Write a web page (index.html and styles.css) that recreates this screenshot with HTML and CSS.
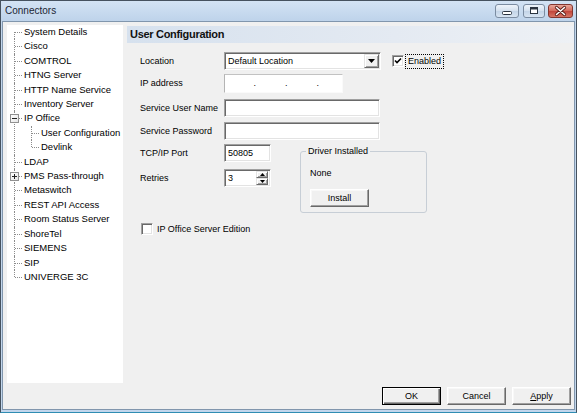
FILE: index.html
```html
<!DOCTYPE html>
<html>
<head>
<meta charset="utf-8">
<title>Connectors</title>
<link rel="stylesheet" href="styles.css">
</head>
<body>
<div class="window">
  <div class="titlebar">
    <span class="title">Connectors</span>
    <div class="caption-btns">
      <span class="cap cap-min"><svg width="22" height="12" viewBox="0 0 22 12"><rect x="6.5" y="6.5" width="9" height="3" rx="1" fill="#fff" stroke="#2b3440"/></svg></span>
      <span class="cap cap-max"><svg width="20" height="12" viewBox="0 0 20 12"><rect x="6.5" y="2.5" width="7" height="6" fill="#fff" stroke="#2b3440"/><rect x="7" y="3" width="6" height="1.5" fill="#2b3440"/></svg></span>
      <span class="cap cap-close"><svg width="23" height="12" viewBox="0 0 23 12"><path d="M7.5 2.5 L15.5 9.5 M15.5 2.5 L7.5 9.5" stroke="#5a1d18" stroke-width="3.2" stroke-linecap="round"/><path d="M7.5 2.5 L15.5 9.5 M15.5 2.5 L7.5 9.5" stroke="#fff" stroke-width="1.6" stroke-linecap="round"/></svg></span>
    </div>
  </div>
  <div class="client">
    <div class="main">
      <div class="tree-panel">
        <ul class="tree">
          <li>System Details</li>
          <li>Cisco</li>
          <li>COMTROL</li>
          <li>HTNG Server</li>
          <li>HTTP Name Service</li>
          <li>Inventory Server</li>
          <li class="has-kids"><span class="toggle toggle-minus"></span>IP Office
            <ul class="sub">
              <li>User Configuration</li>
              <li>Devlink</li>
            </ul>
          </li>
          <li>LDAP</li>
          <li class="has-kids"><span class="toggle toggle-plus"></span>PMS Pass-through</li>
          <li>Metaswitch</li>
          <li>REST API Access</li>
          <li>Room Status Server</li>
          <li>ShoreTel</li>
          <li>SIEMENS</li>
          <li>SIP</li>
          <li>UNIVERGE 3C</li>
        </ul>
      </div>
      <div class="content">
        <div class="header">User Configuration</div>
        <div class="form">
          <div class="row">
            <span class="lbl">Location</span>
            <div class="select sunken">
              <span class="select-value">Default Location</span>
              <span class="select-btn raised"><svg width="7" height="4" viewBox="0 0 7 4"><path d="M0 0 H7 L3.5 4 Z" fill="#000"/></svg></span>
            </div>
            <span class="check check-enabled">
              <span class="box sunken"><svg width="8" height="8" viewBox="0 0 8 8"><path d="M1 3.5 L3 5.5 L7 1.5" fill="none" stroke="#000" stroke-width="1.6"/></svg></span>
              <span class="focus">Enabled</span>
            </span>
          </div>
          <div class="row row-ip">
            <span class="lbl">IP address</span>
            <div class="ipbox">
              <span class="oct"></span><span class="dot">.</span><span class="oct"></span><span class="dot">.</span><span class="oct"></span><span class="dot">.</span><span class="oct"></span>
            </div>
          </div>
          <div class="row row-user">
            <span class="lbl">Service User Name</span>
            <div class="field field-wide sunken"></div>
          </div>
          <div class="row row-pass">
            <span class="lbl">Service Password</span>
            <div class="field field-wide sunken"></div>
          </div>
          <div class="lower">
            <div class="lower-left">
              <div class="row">
                <span class="lbl">TCP/IP Port</span>
                <div class="field field-short sunken">50805</div>
              </div>
              <div class="row row-retries">
                <span class="lbl">Retries</span>
                <div class="spin sunken">
                  <span class="spin-value">3</span>
                  <span class="spin-btns">
                    <span class="spin-btn raised"><svg width="5" height="3" viewBox="0 0 5 3"><path d="M0 3 H5 L2.5 0 Z" fill="#000"/></svg></span>
                    <span class="spin-btn raised"><svg width="5" height="3" viewBox="0 0 5 3"><path d="M0 0 H5 L2.5 3 Z" fill="#000"/></svg></span>
                  </span>
                </div>
              </div>
            </div>
            <div class="group">
              <span class="group-title">Driver Installed</span>
              <div class="group-status">None</div>
              <button class="btn btn-install">Install</button>
            </div>
          </div>
          <div class="check check-server">
            <span class="box sunken"></span>
            <span>IP Office Server Edition</span>
          </div>
        </div>
      </div>
    </div>
    <div class="footer">
      <button class="btn btn-default">OK</button>
      <button class="btn">Cancel</button>
      <button class="btn"><u>A</u>pply</button>
    </div>
  </div>
</div>
</body>
</html>
```
FILE: styles.css
```css
html, body {
  margin: 0;
  padding: 0;
}
body {
  width: 577px;
  height: 413px;
  overflow: hidden;
  font-family: "Liberation Sans", Arial, sans-serif;
  font-size: 9px;
  color: #000;
}
.window {
  width: 577px;
  height: 413px;
  box-sizing: border-box;
  border: 1px solid #46525f;
  border-bottom-color: #2f8db3;
  background: #c2d6ec;
  display: flex;
  flex-direction: column;
}
.titlebar {
  height: 20px;
  flex: none;
  display: flex;
  align-items: flex-start;
  padding: 3px 3px 0 4px;
  box-sizing: border-box;
  background: linear-gradient(to bottom, #d3e3f4, #bed3ea);
}
.title {
  font-size: 10px;
  line-height: 14px;
  color: #1b2533;
  flex: 1;
}
.caption-btns {
  display: flex;
  align-items: flex-start;
}
.cap {
  height: 14px;
  box-sizing: border-box;
  border: 1px solid #7b8ca1;
  border-radius: 3px;
  display: flex;
  align-items: center;
  justify-content: center;
  background: linear-gradient(to bottom, #eef4fb, #d3e0ee 50%, #c3d4e7 51%, #d7e4f2);
}
.cap-min { width: 24px; }
.cap-max { width: 22px; margin-left: 4px; }
.cap-close {
  width: 25px;
  margin-left: 3px;
  border-color: #83362f;
  background: linear-gradient(to bottom, #e9a89b, #d2685a 50%, #c1443a 51%, #d67565);
}
.client {
  flex: 1;
  margin: 0 1px 2px;
  border: 1px solid #8196ad;
  background: #f0f0f0;
  display: flex;
  flex-direction: column;
  min-height: 0;
}
.main {
  flex: 1;
  display: flex;
  padding: 3px 0 0 4px;
  min-height: 0;
}
.tree-panel {
  width: 116px;
  flex: none;
  background: #fff;
  overflow: hidden;
}
.tree, .sub {
  list-style: none;
  margin: 0;
  padding: 0;
}
.tree {
  font-size: 9.5px;
}
.tree li {
  position: relative;
  padding-left: 17px;
  line-height: 14.4px;
  white-space: nowrap;
}
.tree li::before {
  content: "";
  position: absolute;
  left: 7px;
  top: 0;
  bottom: 0;
  border-left: 1px dotted #8c8c8c;
}
.tree li::after {
  content: "";
  position: absolute;
  left: 8px;
  top: 7px;
  width: 7px;
  border-top: 1px dotted #8c8c8c;
}
.tree > li:first-child::before {
  top: 7px;
}
.tree li:last-child::before {
  bottom: auto;
  height: 7px;
}
.tree > li:first-child:last-child::before {
  height: 0;
}
.toggle {
  position: absolute;
  left: 3px;
  top: 3px;
  width: 9px;
  height: 9px;
  box-sizing: border-box;
  border: 1px solid #919191;
  background: linear-gradient(to bottom right, #fff, #e6e6e6);
  z-index: 1;
}
.toggle::before {
  content: "";
  position: absolute;
  left: 1px;
  top: 3px;
  width: 5px;
  height: 1px;
  background: #222;
}
.toggle-plus::after {
  content: "";
  position: absolute;
  left: 3px;
  top: 1px;
  width: 1px;
  height: 5px;
  background: #222;
}
.content {
  flex: 1;
  margin-left: 4px;
  min-width: 0;
}
.header {
  margin-top: 1px;
  height: 17px;
  line-height: 17px;
  padding-left: 3px;
  font-size: 11px;
  font-weight: bold;
  letter-spacing: -0.3px;
  color: #111;
  background: linear-gradient(to right, #d6e1ee, #e4eaf2 60%, #eef1f5);
}
.form {
  padding: 9px 0 0 13px;
}
.row {
  display: flex;
  align-items: center;
  height: 18px;
}
.row-ip { margin-top: 4px; }
.row-user { margin-top: 7px; }
.row-pass { margin-top: 5px; }
.row-retries { margin-top: 7px; }
.lbl {
  width: 84px;
  flex: none;
  white-space: nowrap;
}
.sunken {
  box-sizing: border-box;
  border: 1px solid;
  border-color: #a0a0a0 #fff #fff #a0a0a0;
  box-shadow: inset 1px 1px 0 #696969, inset -1px -1px 0 #e3e3e3;
  background: #fff;
}
.raised {
  box-sizing: border-box;
  border: 1px solid;
  border-color: #e3e3e3 #696969 #696969 #e3e3e3;
  box-shadow: inset 1px 1px 0 #fff, inset -1px -1px 0 #a0a0a0;
  background: #f0f0f0;
}
.select {
  width: 157px;
  height: 18px;
  padding: 1px;
  display: flex;
}
.select-value {
  flex: 1;
  padding-left: 2px;
  line-height: 14px;
}
.select-btn {
  width: 15px;
  display: flex;
  align-items: center;
  justify-content: center;
}
.check {
  display: flex;
  align-items: center;
}
.check-enabled {
  margin-left: 11px;
}
.box {
  width: 12px;
  height: 12px;
  flex: none;
  display: flex;
  align-items: center;
  justify-content: center;
}
.focus {
  margin-left: 1px;
  padding: 1px 2px;
  border: 1px dotted #000;
  line-height: 11px;
}
.ipbox {
  width: 119px;
  height: 19px;
  box-sizing: border-box;
  background: #fff;
  border: 1px solid;
  border-color: #c2c2c2 #fafafa #fafafa #b4b4b4;
  display: flex;
  align-items: center;
  padding-left: 1px;
}
.oct {
  width: 26px;
  flex: none;
}
.dot {
  width: 5.5px;
  flex: none;
  text-align: center;
  line-height: 10px;
}
.field {
  height: 18px;
  line-height: 16px;
  padding-left: 3px;
}
.field-wide { width: 156px; }
.field-short { width: 47px; }
.lower {
  display: flex;
  align-items: flex-start;
  margin-top: 4px;
}
.lower-left {
  width: 160px;
  flex: none;
}
.spin {
  width: 47px;
  height: 18px;
  padding: 1px 2px 1px 1px;
  display: flex;
}
.spin-value {
  flex: 1;
  padding-left: 2px;
  line-height: 14px;
}
.spin-btns {
  width: 12px;
  display: flex;
  flex-direction: column;
}
.spin-btn {
  flex: 1;
  display: flex;
  align-items: center;
  justify-content: center;
}
.group {
  margin-top: 7px;
  width: 127px;
  height: 62px;
  box-sizing: border-box;
  border: 1px solid #c7ced6;
  border-radius: 3px;
  padding-left: 9px;
}
.group-title {
  display: inline-block;
  margin: -7px 0 0 -4px;
  padding: 0 2px;
  line-height: 12px;
  background: #f0f0f0;
  vertical-align: top;
}
.group-status {
  margin-top: 5px;
  line-height: 12px;
}
.btn {
  display: block;
  width: 59px;
  height: 18px;
  box-sizing: border-box;
  margin: 0;
  padding: 0;
  font-family: "Liberation Sans", Arial, sans-serif;
  font-size: 9px;
  color: #000;
  background: #f0f0f0;
  border: 1px solid;
  border-color: #fff #696969 #696969 #fff;
  box-shadow: inset -1px -1px 0 #a0a0a0, inset 1px 1px 0 #f8f8f8;
}
.btn-install {
  margin-top: 10px;
}
.btn-default {
  border-color: #000;
  box-shadow: inset 1px 1px 0 #fff, inset -1px -1px 0 #696969, inset -2px -2px 0 #a0a0a0;
}
.check-server {
  margin-top: 10px;
  margin-left: 1px;
}
.check-server .box {
  margin-right: 4px;
}
.footer {
  flex: none;
  display: flex;
  justify-content: flex-end;
  gap: 6px;
  padding: 4px 3px 4px 0;
}
```
